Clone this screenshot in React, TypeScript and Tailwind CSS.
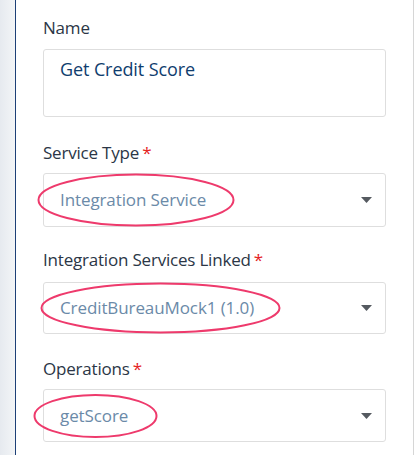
import React from "react"

function Caret() {
  return (
    <svg width="11" height="6" viewBox="0 0 11 6" className="shrink-0">
      <path d="M0 0 L11 0 L5.5 6 Z" fill="#555a60" />
    </svg>
  )
}

function Label({ text, required }: { text: string; required?: boolean }) {
  return (
    <div className="text-[17px] leading-6 tracking-[-0.2px] text-[#2b3646]">
      {text}
      {required && <span className="ml-[3px] text-[#e5231f]">*</span>}
    </div>
  )
}

function Circle({ w, h, left }: { w: number; h: number; left: number }) {
  return (
    <svg
      width={w}
      height={h}
      viewBox={`0 0 ${w} ${h}`}
      className="pointer-events-none absolute top-1/2 -translate-y-1/2"
      style={{ left }}
    >
      <ellipse cx={w / 2} cy={h / 2} rx={w / 2 - 1.5} ry={h / 2 - 1.5} fill="none" stroke="#ee3a6c" strokeWidth="2" />
    </svg>
  )
}

function Select({ value, h, ring }: { value: string; h: string; ring: { w: number; h: number; left: number } }) {
  return (
    <div className={`relative flex items-center justify-between rounded-[3px] border border-[#dedede] bg-white pl-[16px] pr-[13px] ${h}`}>
      <span className="text-[17px] tracking-[-0.1px] text-[#6b8aa8]">{value}</span>
      <Caret />
      <Circle w={ring.w} h={ring.h} left={ring.left} />
    </div>
  )
}

export default function App() {
  return (
    <div className="flex h-[455px] w-[419px] bg-white" style={{ fontFamily: "'Open Sans', 'Noto Sans', sans-serif" }}>
      <div className="w-[15px] bg-gradient-to-r from-[#e6eaef] to-[#f3f5f7]" />
      <div className="w-px bg-[#1d4077]" />
      <div className="w-[398px] border-r border-[#d6d6d6] px-[27px] pt-[16px]">
        <Label text="Name" />
        <div className="mt-[9px] h-[68px] rounded-[3px] border border-[#dedede] px-[16px] pt-[7px] text-[18px] leading-6 tracking-[-0.1px] text-[#0f3d6e]">
          Get Credit Score
        </div>

        <div className="mt-[24px]">
          <Label text="Service Type" required />
        </div>
        <div className="mt-[8px]">
          <Select value="Integration Service" h="h-[54px]" ring={{ w: 198, h: 54, left: -7 }} />
        </div>

        <div className="mt-[21px]">
          <Label text="Integration Services Linked" required />
        </div>
        <div className="mt-[10px]">
          <Select value="CreditBureauMock1 (1.0)" h="h-[52px]" ring={{ w: 241, h: 52, left: -4 }} />
        </div>

        <div className="mt-[23px]">
          <Label text="Operations" required />
        </div>
        <div className="mt-[8px]">
          <Select value="getScore" h="h-[53px]" ring={{ w: 125, h: 45, left: -11 }} />
        </div>
      </div>
    </div>
  )
}
